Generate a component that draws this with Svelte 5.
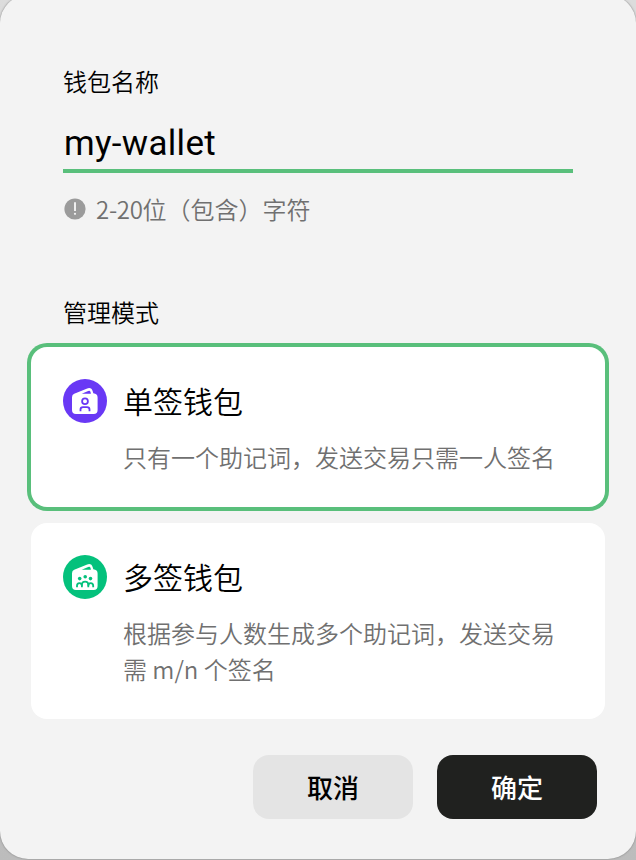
<script>
  const modes = [
    {
      title: '单签钱包',
      lines: ['只有一个助记词，发送交易只需一人签名'],
      color: '#6938f5',
      people: 'single'
    },
    {
      title: '多签钱包',
      lines: ['根据参与人数生成多个助记词，发送交易', '需 m/n 个签名'],
      color: '#04c17c',
      people: 'group'
    }
  ];
  let selected = $state(0);
  let name = $state('my-wallet');
</script>

<div class="backdrop">
  <section class="dialog">
    <label class="label" for="wallet-name">钱包名称</label>
    <input id="wallet-name" class="name" bind:value={name} />
    <p class="hint">
      <svg width="22" height="22" viewBox="0 0 22 22">
        <circle cx="11" cy="11" r="10.6" fill="#9b9b9b" />
        <path d="M11 4.3v8.7" stroke="#f3f3f3" stroke-width="1.9" />
        <circle cx="11" cy="15.8" r="1.1" fill="#f3f3f3" />
      </svg>
      <span><span class="range">2-20</span>位（包含）字符</span>
    </p>
    <h2 class="label mode-label">管理模式</h2>
    <div class="modes">
      {#each modes as mode, i}
        <button class="card" class:selected={selected === i} onclick={() => (selected = i)}>
          <svg class="icon" width="44" height="44" viewBox="0 0 44 44">
            <circle cx="22" cy="22" r="22" fill={mode.color} />
            <path d="M9 18.2Q9 15.8 11.2 14.8L24.2 9.4Q28.5 8 29.8 12.4L30.3 14.2Q34.6 14.8 34.6 18.4V31Q34.6 35 30.6 35H13Q9 35 9 31Z" fill="#fff" />
            <path d="M18.7 14.8L25.2 12Q27 11.3 27.5 13L27.9 14.8Z" fill={mode.color} />
            {#if mode.people === 'single'}
              <g fill="none" stroke={mode.color} stroke-width="1.8">
                <circle cx="22" cy="22.2" r="2.9" />
                <path d="M17.5 32.2V30.5Q17.5 28.1 20 28.1H24Q26.5 28.1 26.5 30.5V32.2" />
              </g>
            {:else}
              <g fill={mode.color}>
                <circle cx="22.2" cy="21.8" r="1.8" />
                <circle cx="16.7" cy="23.6" r="1.8" />
                <circle cx="27.5" cy="23.6" r="1.8" />
              </g>
              <g fill="none" stroke={mode.color} stroke-width="1.8">
                <path d="M18.9 32.2V29.5Q18.9 26.6 22.1 26.6Q25.3 26.6 25.3 29.5V32.2" />
                <path d="M14 32.2V30.8Q14 28.2 16.4 28.2Q18.9 28.2 18.9 30.8" />
                <path d="M25.3 30.8Q25.3 28.2 27.7 28.2Q30.2 28.2 30.2 30.8V32.2" />
              </g>
            {/if}
          </svg>
          <span class="copy">
            <strong>{mode.title}</strong>
            {#each mode.lines as line}<span class="line">{line}</span>{/each}
          </span>
        </button>
      {/each}
    </div>
    <footer>
      <button class="action cancel">取消</button>
      <button class="action confirm">确定</button>
    </footer>
  </section>
</div>

<style>
  :global(body) { margin: 0; overflow: hidden; }
  .backdrop {
    width: 636px;
    height: 860px;
    overflow: hidden;
    background: linear-gradient(#dcdcdc, #bcbcbc);
    font-family: "Noto Sans CJK SC", sans-serif;
    color: #000;
  }
  .dialog {
    box-sizing: border-box;
    height: 864px;
    margin-top: -5px;
    padding: 68px 39px 0 31px;
    border-radius: 28px;
    background: #f3f3f3;
    box-shadow: 0 0 2px #777;
    display: flex;
    flex-direction: column;
  }
  .label {
    margin: 0 0 0 32px;
    font-size: 24px;
    line-height: 36px;
    font-weight: 350;
  }
  .name {
    box-sizing: border-box;
    margin: 19px 0 0 32px;
    padding: 0 0 0 1px;
    width: 510px;
    height: 55px;
    border: 0;
    border-bottom: 4px solid #59bf7b;
    border-radius: 0;
    background: none;
    outline: none;
    font: 400 35px/51px Roboto, sans-serif;
    letter-spacing: 0.3px;
    color: #000;
  }
  .hint {
    display: flex;
    align-items: center;
    gap: 10px;
    margin: 18px 0 0 32px;
    height: 36px;
    padding-left: 1px;
    font-size: 24px;
    line-height: 36px;
    font-weight: 350;
    color: #707070;
    white-space: nowrap;
  }
  .range { letter-spacing: -0.3px; }
  .mode-label { margin-top: 67px; }
  .modes {
    display: flex;
    flex-direction: column;
    gap: 16px;
    margin-top: 17px;
  }
  .card {
    box-sizing: border-box;
    display: flex;
    gap: 16px;
    align-items: flex-start;
    width: 574px;
    height: 160px;
    padding: 32px;
    border: 0;
    border-radius: 16px;
    background: #fff;
    font: inherit;
    text-align: left;
    color: #000;
  }
  .card:last-child { height: 196px; }
  .selected { box-shadow: 0 0 0 4px #59bf7b; }
  .icon { flex: none; }
  .copy { display: flex; flex-direction: column; white-space: nowrap; }
  strong {
    margin-bottom: 18px;
    font-size: 30px;
    line-height: 42px;
    font-weight: 350;
  }
  .line {
    font-size: 24px;
    line-height: 36px;
    font-weight: 350;
    color: #707070;
  }
  footer {
    display: flex;
    justify-content: flex-end;
    gap: 24px;
    margin-top: 36px;
  }
  .action {
    width: 160px;
    height: 64px;
    padding: 0;
    border: 0;
    border-radius: 16px;
    font: 500 26px/64px "Noto Sans CJK SC", sans-serif;
  }
  .cancel { background: #e4e4e4; color: #000; }
  .confirm { background: #20211f; color: #fff; }
</style>
